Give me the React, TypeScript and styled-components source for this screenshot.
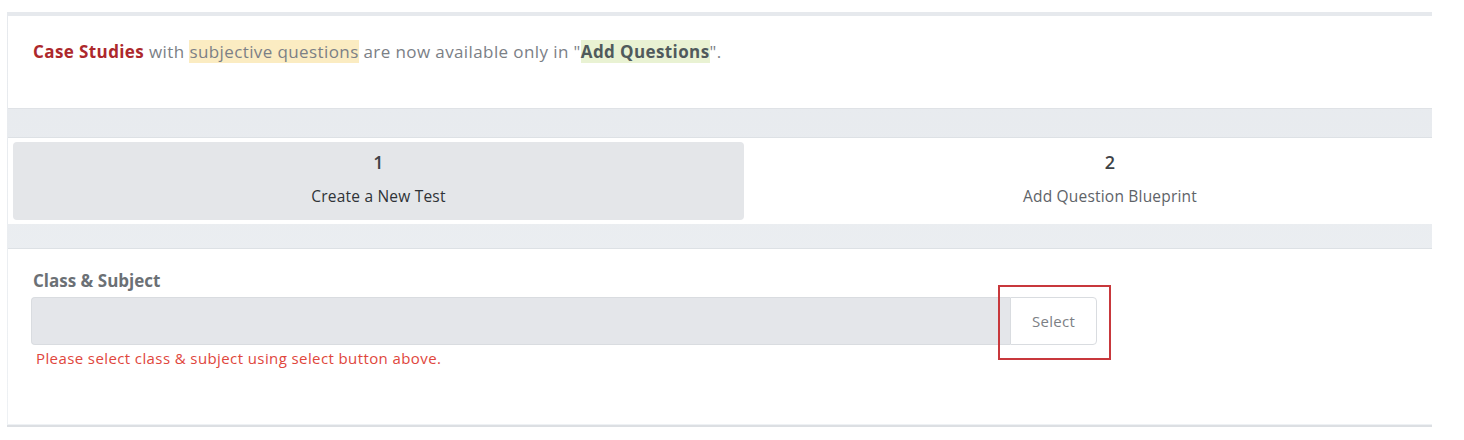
import React from "react";
import styled, { createGlobalStyle } from "styled-components";

const GlobalStyle = createGlobalStyle`
    html, body {
        margin: 0;
        padding: 0;
        background: #ffffff;
        font-family: "Open Sans", "Noto Sans", "Liberation Sans", sans-serif;
        overflow: hidden;
    }
`;

const steps = [
    { num: "1", name: "Create a New Test", active: true },
    { num: "2", name: "Add Question Blueprint", active: false },
];

function App() {
    return (
        <>
            <GlobalStyle />
            <Page>
                <Wrapper>
                    <NoticeCard>
                        <Notice>
                            <CaseTag>Case Studies</CaseTag> with{" "}
                            <YellowMark>subjective questions</YellowMark> are now
                            available only in "<GreenMark>Add Questions</GreenMark>".
                        </Notice>
                    </NoticeCard>
                    <Gap $h={28} />
                    <StepsCard>
                        {steps.map((step) => (
                            <Step key={step.num} $active={step.active}>
                                <StepNum>{step.num}</StepNum>
                                <StepName $active={step.active}>{step.name}</StepName>
                            </Step>
                        ))}
                    </StepsCard>
                    <Gap $h={24} />
                    <FormCard>
                        <Label>Class &amp; Subject</Label>
                        <InputRow>
                            <ReadonlyField />
                            <SelectWrap>
                                <SelectButton>Select</SelectButton>
                            </SelectWrap>
                        </InputRow>
                        <ErrorText>
                            Please select class &amp; subject using select button above.
                        </ErrorText>
                    </FormCard>
                </Wrapper>
            </Page>
        </>
    );
}

export default App;

const Page = styled.div`
    padding: 12px 32px 18px 7px;
`;

const Wrapper = styled.div`
    background: linear-gradient(180deg, #e6e9ed 0%, #eef1f4 100%);
    padding: 4px 0 1px 1px;
    border-bottom: 2px solid #dcdfe3;
`;

const Gap = styled.div<{ $h: number }>`
    height: ${(p) => p.$h}px;
    border-bottom: 1px solid #dde1e5;
`;

const NoticeCard = styled.div`
    background: #ffffff;
    height: 92px;
    padding: 0 25px;
    display: flex;
    align-items: flex-start;
    border-bottom: 1px solid #dfe2e6;
`;

const Notice = styled.p`
    margin: 25px 0 0;
    font-size: 17px;
    line-height: 22px;
    letter-spacing: 0.4px;
    color: #7b8086;
`;

const CaseTag = styled.b`
    color: #ad282c;
    font-weight: 700;
`;

const YellowMark = styled.span`
    background: #fbecc2;
`;

const GreenMark = styled.b`
    background: #e9f2d3;
    color: #505a5c;
    font-weight: 700;
`;

const StepsCard = styled.div`
    background: #ffffff;
    height: 86px;
    padding: 4px 0 4px 5px;
    box-sizing: border-box;
    display: grid;
    grid-template-columns: 731px 732px;
`;

const Step = styled.div<{ $active: boolean }>`
    background: ${(p) => (p.$active ? "#e4e6e9" : "#ffffff")};
    border-radius: 4px;
    display: flex;
    flex-direction: column;
    align-items: center;
    justify-content: center;
    gap: 14px;
    padding-bottom: 6px;
`;

const StepNum = styled.div`
    font-size: 18px;
    line-height: 22px;
    color: #3e4246;
    font-weight: 600;
`;

const StepName = styled.div<{ $active: boolean }>`
    font-size: 15.5px;
    line-height: 18px;
    letter-spacing: 0.2px;
    color: ${(p) => (p.$active ? "#2f3337" : "#5e6368")};
`;

const FormCard = styled.div`
    background: #ffffff;
    height: 175px;
    box-sizing: border-box;
    padding: 22px 0 0 23px;
`;

const Label = styled.div`
    font-size: 17px;
    font-weight: 700;
    color: #6b7075;
    line-height: 20px;
    margin: 0 0 6px 2px;
`;

const InputRow = styled.div`
    display: flex;
    align-items: stretch;
    height: 48px;
`;

const ReadonlyField = styled.div`
    width: 979px;
    background: #e4e6ea;
    border: 1px solid #d9dce0;
    border-right: none;
    border-radius: 4px 0 0 4px;
    box-sizing: border-box;
`;

const SelectWrap = styled.div`
    position: relative;
    display: flex;

    &::after {
        content: "";
        position: absolute;
        left: -12px;
        top: -12px;
        width: 113px;
        height: 75px;
        border: 2px solid #c8383c;
        box-sizing: border-box;
        pointer-events: none;
    }
`;

const SelectButton = styled.button`
    width: 87px;
    background: #ffffff;
    border: 1px solid #d9dce0;
    border-radius: 0 4px 4px 0;
    font-family: inherit;
    font-size: 15px;
    letter-spacing: 0.3px;
    color: #7c8085;
    padding: 0;
    cursor: pointer;
`;

const ErrorText = styled.div`
    margin: 4px 0 0 5px;
    font-size: 15px;
    line-height: 18px;
    letter-spacing: 0.4px;
    color: #e0463c;
`;
